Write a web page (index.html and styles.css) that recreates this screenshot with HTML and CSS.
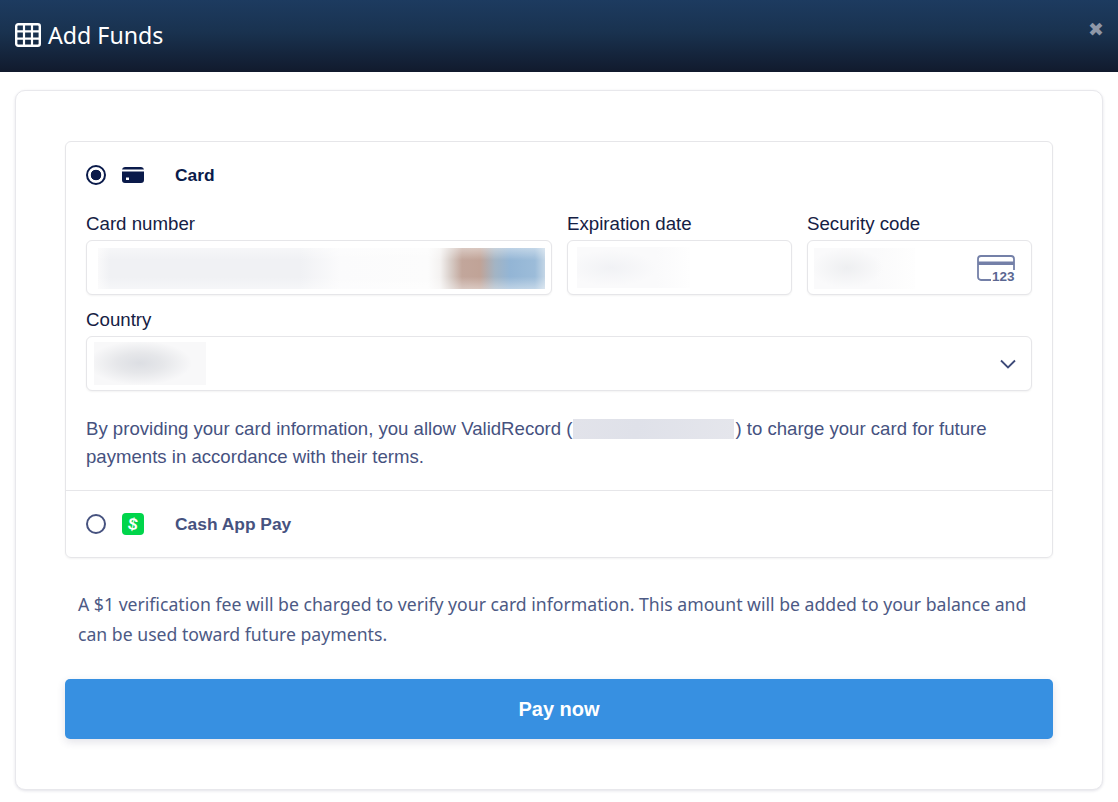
FILE: index.html
```html
<!DOCTYPE html>
<html lang="en">
<head>
<meta charset="utf-8">
<title>Add Funds</title>
<link rel="stylesheet" href="styles.css">
</head>
<body>
<header class="topbar">
  <h1 class="title">
    <svg class="title-icon" viewBox="0 0 26 24" width="26" height="24" aria-hidden="true">
      <rect x="1.200" y="1.200" width="23.600" height="21.600" rx="2" fill="none" stroke="#fff" stroke-width="2.400"/>
      <path fill="none" stroke="#fff" stroke-width="2.200" d="M1 8.300h24M1 15.600h24M9 1v22M17 1v22"/>
    </svg>
    <span>Add Funds</span>
  </h1>
  <span class="close">&#x2716;</span>
</header>

<main class="panel">
  <section class="methods">
    <div class="method method-open">
      <div class="method-head">
        <span class="radio radio-on"></span>
        <svg class="method-icon" viewBox="0 0 22 16" width="22" height="16" aria-hidden="true">
          <path fill="#0a1a4a" d="M3 0h16a3 3 0 0 1 3 2.500H0A3 3 0 0 1 3 0zM0 4.500h22V13a3 3 0 0 1-3 3H3a3 3 0 0 1-3-3zM4 10.500v2.500h3v-2.500z"/>
        </svg>
        <span class="method-name method-name-on">Card</span>
      </div>

      <div class="row-fields">
        <div class="field">
          <label class="label">Card number</label>
          <div class="input">
            <div class="redact redact-number"></div>
          </div>
        </div>
        <div class="field">
          <label class="label">Expiration date</label>
          <div class="input">
            <div class="redact redact-exp"></div>
          </div>
        </div>
        <div class="field">
          <label class="label">Security code</label>
          <div class="input">
            <div class="redact redact-cvc"></div>
            <span class="cvc-icon">
              <svg viewBox="0 0 38 32" width="38" height="32" aria-hidden="true">
                <path fill="none" stroke="#7480a8" stroke-width="1.800" d="M14 25H4a3 3 0 0 1-3-3V4a3 3 0 0 1 3-3h30a3 3 0 0 1 3 3v11"/>
                <rect x="1" y="6.500" width="36" height="3.500" fill="#7480a8"/>
                <text x="15" y="25.500" class="cvc-text">123</text>
              </svg>
            </span>
          </div>
        </div>
      </div>

      <div class="field field-country">
        <label class="label">Country</label>
        <div class="input">
          <div class="redact redact-country"></div>
          <svg class="chevron" viewBox="0 0 16 10" width="16" height="10" aria-hidden="true">
            <path fill="none" stroke="#3d4a78" stroke-width="1.800" d="M1 1.500l7 7 7-7"/>
          </svg>
        </div>
      </div>

      <p class="legal">By providing your card information, you allow ValidRecord (<span class="redact-inline"></span>) to charge your card for future payments in accordance with their terms.</p>
    </div>

    <div class="method method-closed">
      <span class="radio"></span>
      <svg class="method-icon" viewBox="0 0 22 22" width="22" height="22" aria-hidden="true">
        <rect width="22" height="22" rx="4" fill="#00d54b"/>
        <text x="11" y="17" class="cash-text" transform="rotate(10 11 11)">$</text>
      </svg>
      <span class="method-name">Cash App Pay</span>
    </div>
  </section>

  <p class="note">A $1 verification fee will be charged to verify your card information. This amount will be added to your balance and can be used toward future payments.</p>

  <button class="pay" type="button">Pay now</button>
</main>
</body>
</html>
```
FILE: styles.css
```css
* { box-sizing: border-box; }

html, body {
  margin: 0;
  padding: 0;
  background: #fff;
}

body {
  width: 1118px;
  height: 802px;
  overflow: hidden;
  font-family: "Liberation Sans", Arial, sans-serif;
}

.topbar {
  height: 72px;
  display: flex;
  justify-content: space-between;
  background: linear-gradient(to bottom, #1d3b60 0%, #19324f 45%, #111a2d 100%);
  color: #fff;
  padding: 0 14px 0 15px;
}

.title {
  margin: 0;
  display: flex;
  align-items: center;
  gap: 7px;
  height: 70px;
  font-family: "Noto Sans", sans-serif;
  font-size: 23.200px;
  font-weight: 400;
  line-height: 70px;
}

.title-icon { display: block; flex: none; }

.close {
  font-family: "DejaVu Sans", sans-serif;
  font-size: 19px;
  line-height: 58px;
  color: #8f98a8;
}

.panel {
  width: 1088px;
  height: 700px;
  margin: 18px 0 0 15px;
  padding: 50px 49px 0;
  background: #fff;
  border: 1px solid #e8e8ec;
  border-radius: 10px;
  box-shadow: 0 1px 3px rgba(50, 50, 93, 0.14);
}

.methods {
  width: 988px;
  border: 1px solid #e6e6e9;
  border-radius: 6px;
  box-shadow: 0 1px 2px rgba(0, 0, 0, 0.05);
}

.method-open {
  padding: 20px 20px 0;
  height: 349px;
  border-bottom: 1px solid #e6e6e9;
}

.method-head {
  display: flex;
  align-items: center;
  height: 26px;
}

.radio {
  flex: none;
  width: 20px;
  height: 20px;
  border: 2px solid #46527f;
  border-radius: 50%;
  background: #fff;
}

.radio-on {
  border-color: #0a1a4a;
  background: radial-gradient(circle, #0a1a4a 0 5px, #fff 5.600px);
}

.method-icon {
  flex: none;
  margin-left: 16px;
  margin-right: 31px;
  display: block;
}

.method-name {
  font-size: 17.400px;
  font-weight: 700;
  color: #46527f;
}

.method-name-on { color: #0a1a4a; }

.row-fields {
  display: grid;
  grid-template-columns: 466px 225px 225px;
  column-gap: 15px;
  margin-top: 24px;
}

.field { min-width: 0; }

.field-country { margin-top: 13px; }

.label {
  display: block;
  height: 23px;
  margin-bottom: 5px;
  font-size: 18.700px;
  line-height: 24px;
  color: #152044;
}

.input {
  position: relative;
  height: 55px;
  background: #fff;
  border: 1px solid #e6e6e9;
  border-radius: 6px;
  box-shadow: 0 1px 2px rgba(0, 0, 0, 0.05);
}

.redact {
  position: absolute;
  top: 7px;
  height: 41px;
}

.redact-number {
  left: 11px;
  width: 447px;
  background:
    linear-gradient(to bottom, rgba(255, 255, 255, 0.4), rgba(255, 255, 255, 0) 30%, rgba(255, 255, 255, 0) 70%, rgba(255, 255, 255, 0.4)),
    linear-gradient(to right,
      #f9f9fa 0, #f0f1f4 12px, #f0f1f4 202px, #fbfbfc 242px,
      #fcfcfc 330px, #f4f2f1 342px, #d9cfca 352px, #c2a69b 364px, #c0a397 382px,
      #a3b4c4 397px, #93b5d5 412px, #9cbcd9 437px, #c4d6e6 447px);
}

.redact-exp {
  top: 6px;
  left: 9px;
  width: 113px;
  background:
    radial-gradient(ellipse 45px 18px at 34px 21px, #f1f2f5, rgba(250, 250, 251, 0) 100%),
    linear-gradient(to right, #fafafb 70%, #fefefe 100%);
}

.redact-cvc {
  left: 6px;
  width: 101px;
  background:
    radial-gradient(ellipse 36px 20px at 33px 20px, #eeeff1, rgba(250, 250, 251, 0) 100%),
    linear-gradient(to right, #fafafb 60%, #fefefe 100%);
}

.redact-country {
  top: 5px;
  left: 7px;
  width: 112px;
  height: 43px;
  background:
    radial-gradient(ellipse 52px 22px at 46px 21px, #dcdee3 0, #e6e7ea 45%, rgba(248, 248, 249, 0) 100%),
    #f8f8f9;
}

.cvc-icon {
  position: absolute;
  top: 14px;
  right: 16px;
  display: block;
  width: 38px;
  height: 32px;
}

.cvc-icon svg { display: block; }

.cvc-text {
  font-family: "Liberation Sans", sans-serif;
  font-size: 13.500px;
  font-weight: 700;
  fill: #5b6791;
}

.cash-text {
  font-family: "Liberation Sans", sans-serif;
  font-size: 17px;
  font-weight: 700;
  fill: #fff;
  text-anchor: middle;
}

.chevron {
  position: absolute;
  top: 22px;
  right: 15px;
}

.legal {
  margin: 24px 0 0;
  font-size: 18.600px;
  line-height: 28px;
  color: #46527f;
}

.redact-inline {
  display: inline-block;
  width: 161px;
  height: 20px;
  margin: 0 1px;
  vertical-align: -4px;
  background: linear-gradient(100deg, #e2e3ea, #dfe1e9 40%, #e5e6ec 100%);
}

.method-closed {
  display: flex;
  align-items: center;
  height: 66px;
  padding: 0 20px;
}

.note {
  margin: 31px 12px 0 13px;
  font-family: "Noto Sans", sans-serif;
  font-size: 17.650px;
  line-height: 30px;
  color: #4d5a85;
}

.pay {
  display: block;
  width: 988px;
  height: 60px;
  margin-top: 30px;
  border: 0;
  border-radius: 5px;
  background: #3790e1;
  color: #fff;
  font-family: "Liberation Sans", sans-serif;
  font-size: 20px;
  font-weight: 700;
  box-shadow: 0 3px 8px rgba(50, 50, 93, 0.14);
}
```
